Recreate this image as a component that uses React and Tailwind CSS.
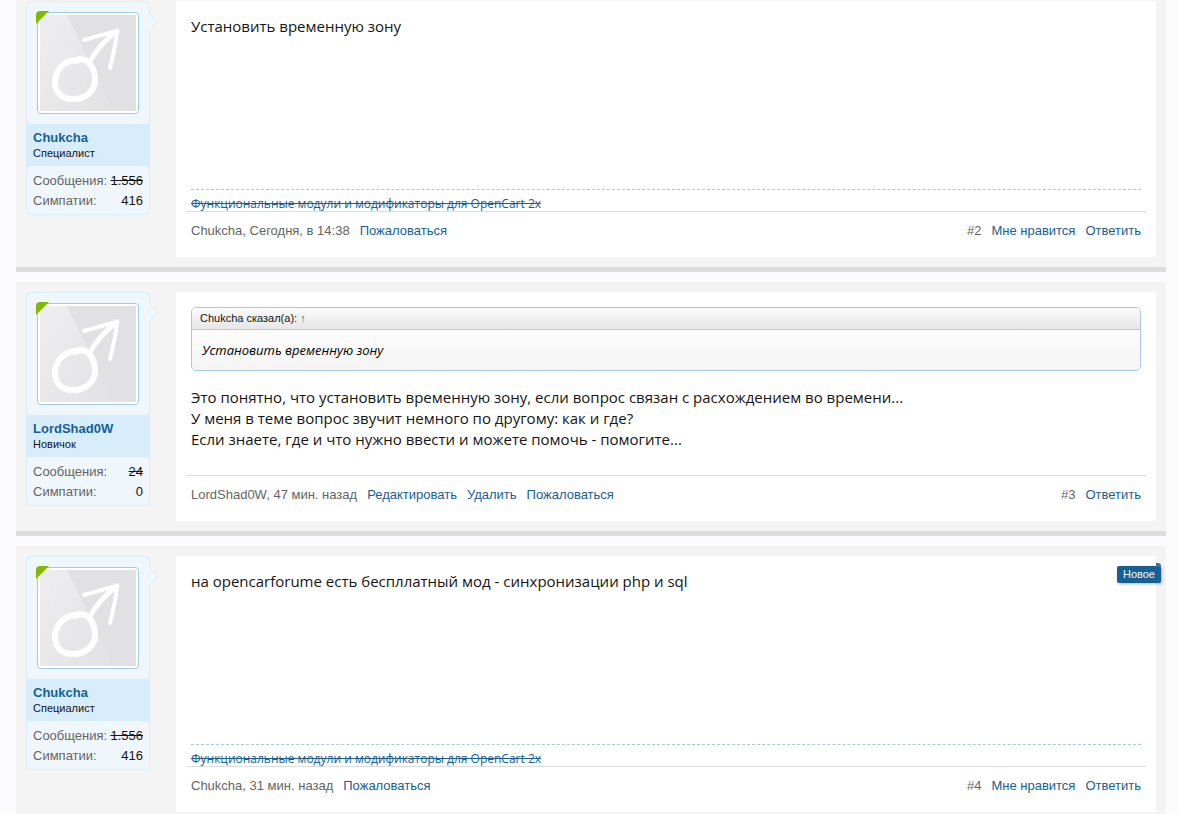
import { clsx } from 'clsx';

const chukcha = { name: 'Chukcha', title: 'Специалист', messages: '1.556', likes: '416' };
const lordShadow = { name: 'LordShad0W', title: 'Новичок', messages: '24', likes: '0' };

const posts = [
  {
    id: 2,
    user: chukcha,
    lines: ['Установить временную зону'],
    signature: 'Функциональные модули и модификаторы для OpenCart 2x',
    date: 'Сегодня, в 14:38',
    actions: ['Пожаловаться'],
    publicActions: ['Мне нравится', 'Ответить'],
  },
  {
    id: 3,
    user: lordShadow,
    quote: { author: 'Chukcha', text: 'Установить временную зону' },
    lines: [
      'Это понятно, что установить временную зону, если вопрос связан с расхождением во времени...',
      'У меня в теме вопрос звучит немного по другому: как и где?',
      'Если знаете, где и что нужно ввести и можете помочь - помогите...',
    ],
    date: '47 мин. назад',
    actions: ['Редактировать', 'Удалить', 'Пожаловаться'],
    publicActions: ['Ответить'],
  },
  {
    id: 4,
    user: chukcha,
    isNew: true,
    lines: ['на opencarforume есть беспллатный мод - синхронизации php и sql'],
    signature: 'Функциональные модули и модификаторы для OpenCart 2x',
    date: '31 мин. назад',
    actions: ['Пожаловаться'],
    publicActions: ['Мне нравится', 'Ответить'],
  },
];

function Avatar({ name }) {
  return (
    <a
      href="#"
      aria-label={name}
      className="relative block rounded-[4px] border border-[#a5cae4] bg-white p-[2px]"
    >
      <svg viewBox="0 0 96 96" className="block w-full" aria-hidden="true">
        <defs>
          <linearGradient id="shine" x1="0" y1="0" x2="1" y2="1">
            <stop offset="0" stopColor="#eeeef0" />
            <stop offset="1" stopColor="#e2e2e4" />
          </linearGradient>
        </defs>
        <rect width="96" height="96" fill="#e1e1e3" />
        <path d="M0 0H27L73 96H0Z" fill="url(#shine)" />
        <g fill="none" stroke="#fff" strokeLinecap="round" strokeLinejoin="round">
          <path strokeWidth="6" d="M37 45C26 45 16 53 15 66C15 78 22 84 33 84C46 84 55 76 55 64C55 52 47 43 39 44L36 46" />
          <path strokeWidth="5" d="M50 46C56 36 66 24 77 16" />
          <path strokeWidth="4" d="M44 25C54 22 66 19 77 16C76 28 73 41 70 53" />
        </g>
      </svg>
      {/* online marker */}
      <svg viewBox="0 0 13 13" className="absolute -top-[2px] -left-[2px] h-[13px] w-[13px]" aria-hidden="true">
        <path d="M0 13V4Q0 0 4 0H13Z" fill="#7fb900" />
      </svg>
    </a>
  );
}

function UserCard({ user }) {
  return (
    <aside className="relative w-[124px] shrink-0 self-start rounded-[4px] border border-[#d7edfc] bg-[#d7edfc]">
      <div className="rounded-[4px] bg-[#f0f7fc] p-[10px]">
        <Avatar name={user.name} />
      </div>
      <div className="px-[6px] pt-[6px] pb-[6px]">
        <h3 className="text-[13px] leading-[16px] font-bold text-[#176093]">
          <a href="#">{user.name}</a>
        </h3>
        <p className="text-[11px] leading-[14px] text-[#141414]">{user.title}</p>
      </div>
      <dl className="rounded-[4px] bg-[#f0f7fc] px-[6px] pt-[5px] pb-[3px] text-[13px] leading-[20px]">
        <div className="flex justify-between">
          <dt className="text-[#646464]">Сообщения:</dt>
          <dd className="text-[#141414] line-through">{user.messages}</dd>
        </div>
        <div className="flex justify-between">
          <dt className="text-[#646464]">Симпатии:</dt>
          <dd className="text-[#141414]">{user.likes}</dd>
        </div>
      </dl>
      <svg viewBox="0 0 10 20" className="absolute top-[10px] left-[122px] h-[20px] w-[10px]" aria-hidden="true">
        <path d="M0 1L9.5 10L0 19Z" fill="#f0f7fc" />
        <path d="M0.5 1.5L9 10L0.5 18.5" fill="none" stroke="#d7edfc" />
      </svg>
    </aside>
  );
}

function Quote({ quote }) {
  return (
    <blockquote className="mb-4 overflow-hidden rounded-[5px] border border-[#a5cae4]">
      <div className="border-b border-[#c8c8c8] bg-linear-to-b from-[#fafafa] to-[#e7e7e7] px-2 text-[11px] leading-[21px] text-[#141414]">
        {quote.author} сказал(а): <a href="#" className="text-[#176093]">↑</a>
      </div>
      <div className="bg-linear-to-b from-[#fcfcfc] to-[#f5f5f5] px-[10px] py-[10px] font-['Open_Sans',sans-serif] text-[13px] leading-[20px] text-black italic">
        {quote.text}
      </div>
    </blockquote>
  );
}

function Post({ post, first }) {
  return (
    <li
      className={clsx(
        'flex gap-[26px] border-b-[5px] border-[#dcdcdc] bg-[#f4f4f4] px-[10px] pb-[10px]',
        first ? 'pt-px' : 'pt-[10px]'
      )}
    >
      <UserCard user={post.user} />
      <article className="relative min-w-0 flex-1 bg-white px-[15px] pt-[15px] pb-[17px]">
        {post.isNew && (
          <strong className="absolute top-[10px] -right-[5px] rounded-[2px] bg-[#176093] px-[6px] text-[11px] leading-[17px] font-normal text-[#f0f7fc] shadow-[1px_1px_3px_rgba(0,0,0,0.3)]">
            <span className="absolute -top-[3px] right-0 h-[4px] w-[5px] rounded-tr-[3px] bg-[#3e7198]" />
            Новое
          </strong>
        )}
        <div className={clsx(post.signature ? 'min-h-[173px]' : 'pb-[25px]')}>
          {post.quote && <Quote quote={post.quote} />}
          <div className="font-['Open_Sans',sans-serif] text-[15px] leading-[21px] text-[#141414]">
            {post.lines.map((line) => (
              <p key={line}>{line}</p>
            ))}
          </div>
        </div>
        {post.signature && (
          <div className="border-t border-dashed border-[#a5cae4] pt-[7px] font-['Open_Sans',sans-serif] text-[12px] leading-[14px]">
            <a href="#" className="text-[#176093] line-through">{post.signature}</a>
          </div>
        )}
        <footer className="-mx-[5px] flex justify-between border-t border-[#dcdcdc] px-[5px] pt-[10px] text-[13px] leading-[18px] text-[#646464]">
          <div className="flex gap-[10px]">
            <span>
              <a href="#">{post.user.name}</a>, <a href="#">{post.date}</a>
            </span>
            {post.actions.map((action) => (
              <a key={action} href="#" className="text-[#176093]">{action}</a>
            ))}
          </div>
          <div className="flex gap-[10px]">
            <a href="#">#{post.id}</a>
            {post.publicActions.map((action) => (
              <a key={action} href="#" className="text-[#176093]">{action}</a>
            ))}
          </div>
        </footer>
      </article>
    </li>
  );
}

function App() {
  return (
    <main className="h-screen overflow-hidden bg-[#fcfcff] pr-3 pl-4 font-['Liberation_Sans',Arial,sans-serif]">
      <ol className="flex flex-col gap-[10px]">
        {posts.map((post, index) => (
          <Post key={post.id} post={post} first={index === 0} />
        ))}
      </ol>
    </main>
  );
}

export default App;
